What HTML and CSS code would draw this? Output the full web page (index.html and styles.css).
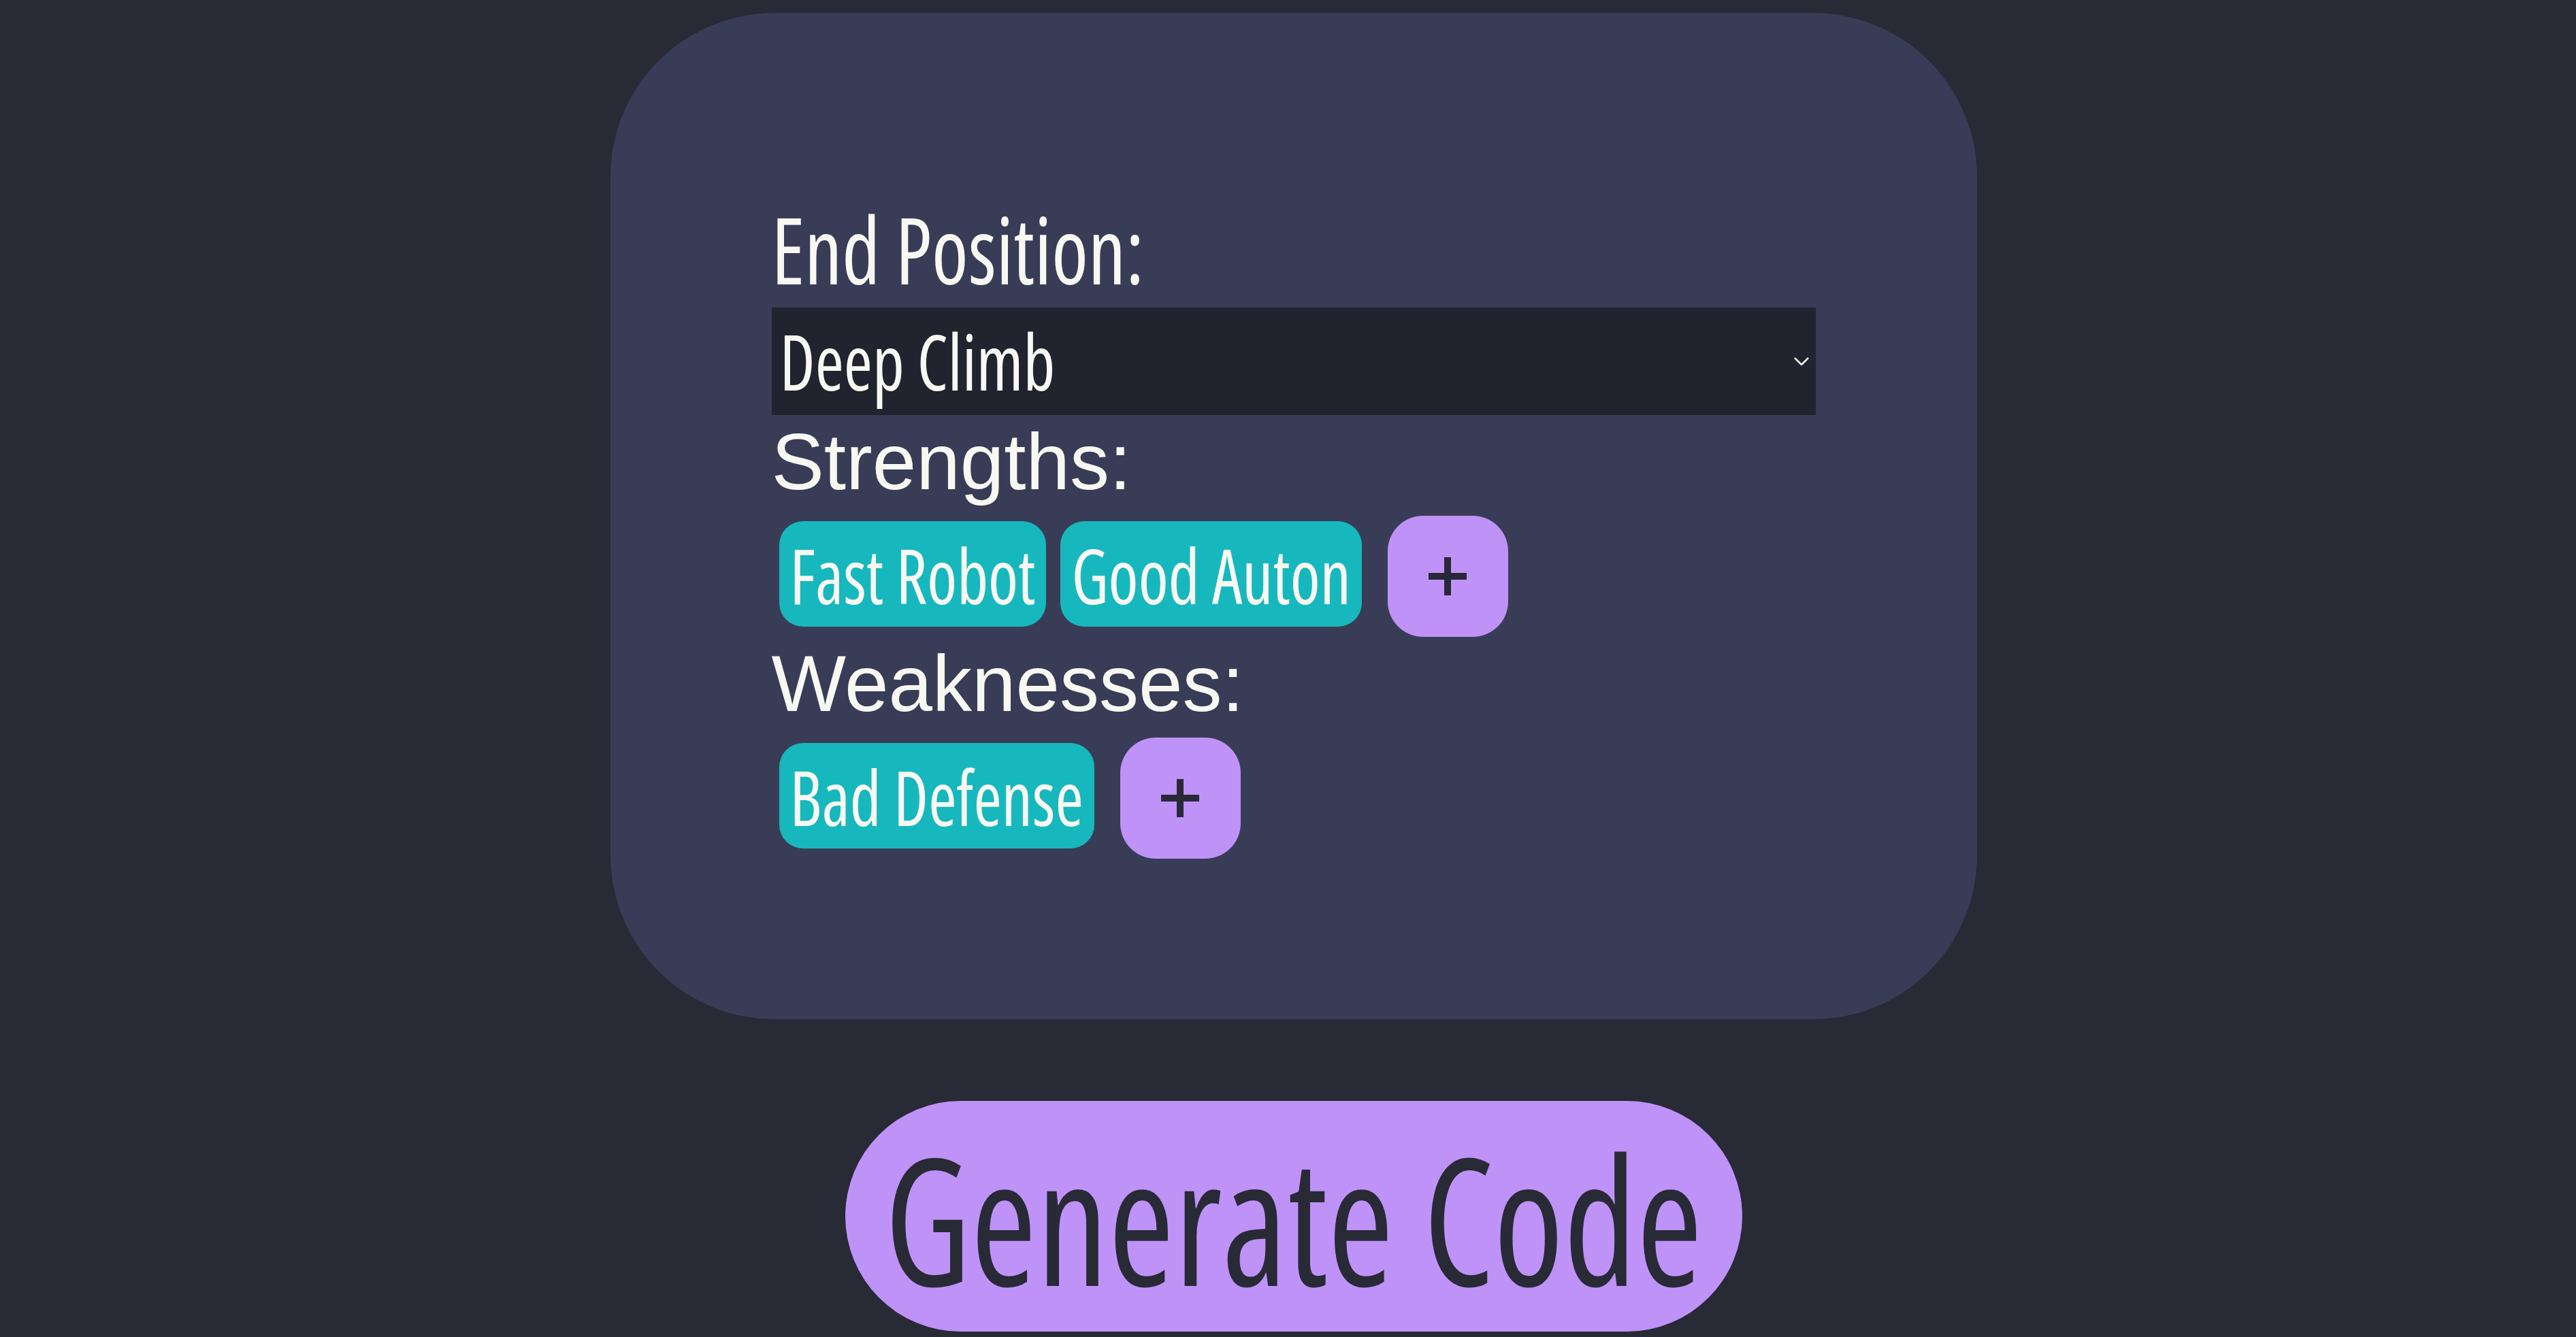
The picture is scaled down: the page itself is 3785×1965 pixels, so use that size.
FILE: index.html
```html
<!DOCTYPE html>
<html lang="en">
<head>
<meta charset="utf-8">
<title>Scouting Form</title>
<link rel="stylesheet" href="styles.css">
</head>
<body>
<main class="page">
  <section class="card">
    <div class="field-label"><span class="tall">End Position:</span></div>
    <div class="select" role="combobox" aria-expanded="false">
      <span class="tall select-value">Deep Climb</span>
      <svg class="chevron" width="22" height="12" viewBox="0 0 22 12" aria-hidden="true"><polyline points="1,1 11,11 21,1" fill="none" stroke="#f8f8f2" stroke-width="2.5"/></svg>
    </div>
    <div class="section-label">Strengths:</div>
    <div class="chip-row">
      <div class="chips">
        <span class="chip"><span class="tall">Fast Robot</span></span>
        <span class="chip"><span class="tall">Good Auton</span></span>
      </div>
      <button class="add-btn" aria-label="Add strength"><svg width="56" height="56" viewBox="0 0 56 56" aria-hidden="true"><rect x="23" y="0" width="10" height="56" fill="#282936"/><rect x="0" y="23" width="56" height="10" fill="#282936"/></svg></button>
    </div>
    <div class="section-label">Weaknesses:</div>
    <div class="chip-row">
      <div class="chips">
        <span class="chip"><span class="tall">Bad Defense</span></span>
      </div>
      <button class="add-btn" aria-label="Add weakness"><svg width="56" height="56" viewBox="0 0 56 56" aria-hidden="true"><rect x="23" y="0" width="10" height="56" fill="#282936"/><rect x="0" y="23" width="56" height="10" fill="#282936"/></svg></button>
    </div>
  </section>
  <button class="generate"><span class="tall">Generate Code</span></button>
</main>
</body>
</html>
```

FILE: styles.css
```css
html, body {
  margin: 0;
  background: #282a36;
}

body {
  font-family: "Liberation Sans", Arial, sans-serif;
  color: #f8f8f2;
}

.page {
  display: flex;
  flex-direction: column;
  align-items: center;
  padding: 19px 0 0 16px;
}

.card {
  box-sizing: border-box;
  width: 2008px;
  padding: 282px 237px 236px;
  background: #393c56;
  border-radius: 241px;
}

/* condensed display face */
.field-label,
.select,
.chip,
.generate {
  font-family: "Open Sans", "Roboto Condensed", "DejaVu Sans", sans-serif;
  font-stretch: 75%;
  font-weight: 500;
}

.tall {
  display: inline-block;
  line-height: 1;
  white-space: nowrap;
  transform: scaleY(1.11);
  transform-origin: 50% 88.8%;
}

.field-label {
  height: 140px;
  line-height: 140px;
  font-size: 122px;
}

.select {
  box-sizing: border-box;
  display: flex;
  justify-content: space-between;
  align-items: center;
  height: 158px;
  margin-top: 11px;
  padding: 0 10px 0 12px;
  background: #21232e;
  font-size: 102px;
}

.select-value {
  align-self: flex-start;
  margin-top: 32px;
}

.chevron {
  display: block;
}

.section-label {
  font-size: 116px;
  line-height: 138px;
}

.chip-row {
  display: flex;
  align-items: flex-start;
  margin-top: 10px;
}

.chips {
  display: flex;
  gap: 21px;
  margin: 8px 0 0 11px;
}

.chip {
  box-sizing: border-box;
  display: block;
  height: 155px;
  padding: 33px 16px 0;
  background: #17b8bd;
  border-radius: 35px;
  font-size: 100px;
  line-height: 1;
  color: #f8f8f2;
}

.add-btn {
  display: flex;
  align-items: center;
  justify-content: center;
  width: 177px;
  height: 178px;
  margin-left: 38px;
  padding: 0;
  border: 0;
  border-radius: 52px;
  background: #bf92f8;
}

.add-btn svg {
  display: block;
}

.generate {
  box-sizing: border-box;
  display: flex;
  align-items: flex-start;
  justify-content: center;
  height: 339px;
  margin-top: 120px;
  padding: 65px 58px 0;
  border: 0;
  border-radius: 170px;
  background: #bf92f8;
  color: #282a36;
  font-size: 234px;
}
```
